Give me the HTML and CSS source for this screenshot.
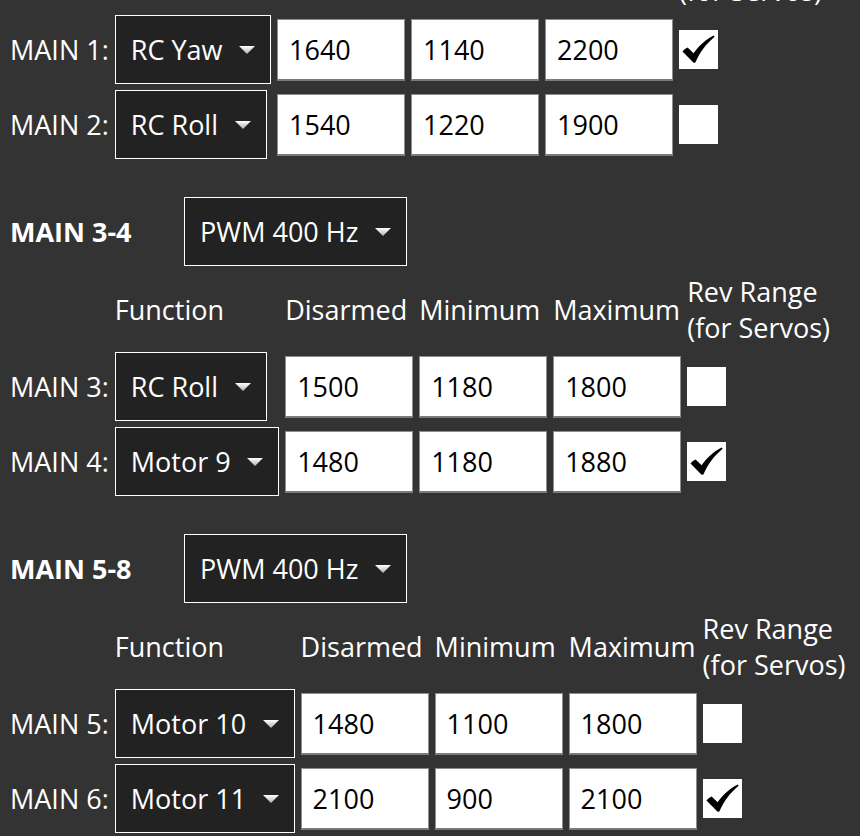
FILE: index.html
```html
<!DOCTYPE html>
<html>
<head>
<meta charset="utf-8">
<link rel="stylesheet" href="styles.css">
</head>
<body>
<div class="page">

  <section class="group">
    <div class="group-head">
      <span class="group-name">MAIN 1-2</span>
      <div class="select">PWM 400 Hz<svg class="arrow" width="16" height="8" viewBox="0 0 16 8"><defs><linearGradient id="ag1" x1="0" y1="0" x2="0" y2="1"><stop offset="0" stop-color="#fff"/><stop offset="1" stop-color="#b0b0b0"/></linearGradient></defs><polygon points="0,0 16,0 8,8" fill="url(#ag1)"/></svg></div>
    </div>
    <table class="outputs">
      <tr><th></th><th>Function</th><th>Disarmed</th><th>Minimum</th><th>Maximum</th><th>Rev Range<br>(for Servos)</th></tr>
      <tr>
        <td class="label">MAIN 1:</td>
        <td><div class="select">RC Yaw<svg class="arrow" width="16" height="8" viewBox="0 0 16 8"><polygon points="0,0 16,0 8,8" fill="url(#ag1)"/></svg></div></td>
        <td><input class="num" type="text" value="1640"></td>
        <td><input class="num" type="text" value="1140"></td>
        <td><input class="num" type="text" value="2200"></td>
        <td><span class="check"><svg width="39" height="39" viewBox="0 0 39 39"><path d="M3.5 21.5 C5 19.8 6.8 18.4 8.6 17.6 L14.6 23.2 C20 15.5 27 9.2 34.8 5.4 L35.6 6.8 C27.5 13.6 20.8 22 16.4 32.6 L14.6 32.8 Z" fill="#000"/></svg></span></td>
      </tr>
      <tr>
        <td class="label">MAIN 2:</td>
        <td><div class="select">RC Roll<svg class="arrow" width="16" height="8" viewBox="0 0 16 8"><polygon points="0,0 16,0 8,8" fill="url(#ag1)"/></svg></div></td>
        <td><input class="num" type="text" value="1540"></td>
        <td><input class="num" type="text" value="1220"></td>
        <td><input class="num" type="text" value="1900"></td>
        <td><span class="check"></span></td>
      </tr>
    </table>
  </section>

  <section class="group">
    <div class="group-head">
      <span class="group-name">MAIN 3-4</span>
      <div class="select">PWM 400 Hz<svg class="arrow" width="16" height="8" viewBox="0 0 16 8"><polygon points="0,0 16,0 8,8" fill="url(#ag1)"/></svg></div>
    </div>
    <table class="outputs">
      <tr><th></th><th>Function</th><th>Disarmed</th><th>Minimum</th><th>Maximum</th><th>Rev Range<br>(for Servos)</th></tr>
      <tr>
        <td class="label">MAIN 3:</td>
        <td><div class="select">RC Roll<svg class="arrow" width="16" height="8" viewBox="0 0 16 8"><polygon points="0,0 16,0 8,8" fill="url(#ag1)"/></svg></div></td>
        <td><input class="num" type="text" value="1500"></td>
        <td><input class="num" type="text" value="1180"></td>
        <td><input class="num" type="text" value="1800"></td>
        <td><span class="check"></span></td>
      </tr>
      <tr>
        <td class="label">MAIN 4:</td>
        <td><div class="select">Motor 9<svg class="arrow" width="16" height="8" viewBox="0 0 16 8"><polygon points="0,0 16,0 8,8" fill="url(#ag1)"/></svg></div></td>
        <td><input class="num" type="text" value="1480"></td>
        <td><input class="num" type="text" value="1180"></td>
        <td><input class="num" type="text" value="1880"></td>
        <td><span class="check"><svg width="39" height="39" viewBox="0 0 39 39"><path d="M3.5 21.5 C5 19.8 6.8 18.4 8.6 17.6 L14.6 23.2 C20 15.5 27 9.2 34.8 5.4 L35.6 6.8 C27.5 13.6 20.8 22 16.4 32.6 L14.6 32.8 Z" fill="#000"/></svg></span></td>
      </tr>
    </table>
  </section>

  <section class="group">
    <div class="group-head">
      <span class="group-name">MAIN 5-8</span>
      <div class="select">PWM 400 Hz<svg class="arrow" width="16" height="8" viewBox="0 0 16 8"><polygon points="0,0 16,0 8,8" fill="url(#ag1)"/></svg></div>
    </div>
    <table class="outputs">
      <tr><th></th><th>Function</th><th>Disarmed</th><th>Minimum</th><th>Maximum</th><th>Rev Range<br>(for Servos)</th></tr>
      <tr>
        <td class="label">MAIN 5:</td>
        <td><div class="select">Motor 10<svg class="arrow" width="16" height="8" viewBox="0 0 16 8"><polygon points="0,0 16,0 8,8" fill="url(#ag1)"/></svg></div></td>
        <td><input class="num" type="text" value="1480"></td>
        <td><input class="num" type="text" value="1100"></td>
        <td><input class="num" type="text" value="1800"></td>
        <td><span class="check"></span></td>
      </tr>
      <tr>
        <td class="label">MAIN 6:</td>
        <td><div class="select">Motor 11<svg class="arrow" width="16" height="8" viewBox="0 0 16 8"><polygon points="0,0 16,0 8,8" fill="url(#ag1)"/></svg></div></td>
        <td><input class="num" type="text" value="2100"></td>
        <td><input class="num" type="text" value="900"></td>
        <td><input class="num" type="text" value="2100"></td>
        <td><span class="check"><svg width="39" height="39" viewBox="0 0 39 39"><path d="M3.5 21.5 C5 19.8 6.8 18.4 8.6 17.6 L14.6 23.2 C20 15.5 27 9.2 34.8 5.4 L35.6 6.8 C27.5 13.6 20.8 22 16.4 32.6 L14.6 32.8 Z" fill="#000"/></svg></span></td>
      </tr>
    </table>
  </section>

</div>
</body>
</html>
```

FILE: styles.css
```css
html, body {
  margin: 0;
  padding: 0;
  background: #333333;
  overflow: hidden;
}

body {
  font-family: "Open Sans", "DejaVu Sans", sans-serif;
  font-size: 27px;
  line-height: 36px;
  color: #ffffff;
}

.page {
  padding-left: 7px;
  margin-top: -140px;
}

.group {
  margin-bottom: 35px;
}

.group-head {
  display: flex;
  align-items: center;
  padding-left: 3px;
  margin-bottom: 5px;
}

.group-name {
  flex: 0 0 174px;
  font-weight: 700;
  white-space: nowrap;
}

.select {
  display: inline-flex;
  align-items: center;
  gap: 16.5px;
  box-sizing: border-box;
  height: 69px;
  padding: 0 15px 0 15px;
  border: 1px solid #ffffff;
  background: #222222;
  color: #ffffff;
  white-space: nowrap;
}

.arrow {
  display: block;
  flex: none;
}

.outputs {
  border-collapse: separate;
  border-spacing: 0;
}

.outputs th,
.outputs td {
  padding: 3px;
  text-align: left;
  vertical-align: middle;
  font-weight: 400;
  white-space: nowrap;
}

.outputs td .select {
  display: flex;
  width: max-content;
}

.num {
  display: block;
  box-sizing: border-box;
  width: 128px;
  height: 62px;
  margin: 0;
  padding: 0 0 0 11px;
  border: 1px solid #8c8c8c;
  border-bottom: 2px solid #7a7a7a;
  background: #ffffff;
  color: #000000;
  font-family: "Open Sans", "DejaVu Sans", sans-serif;
  font-size: 27px;
  outline: none;
}

.check {
  display: block;
  width: 39px;
  height: 39px;
  background: #ffffff;
}

.check svg {
  display: block;
  filter: blur(0.5px);
}
```
